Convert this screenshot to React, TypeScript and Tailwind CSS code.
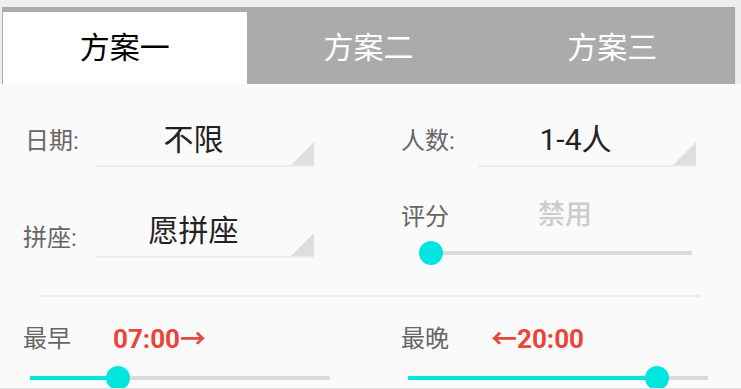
import React from "react";

const FONT = "font-['Roboto','Noto_Sans_CJK_SC',sans-serif]";

const TABS = ["方案一", "方案二", "方案三"];

interface DropdownProps {
  value: string;
}

// spinner: value centred in the space left of the corner triangle
const Dropdown = ({ value }: DropdownProps) => (
  <div className="relative w-[218px] h-[52px] pr-[23px] border-b-2 border-[#ececec] flex items-center justify-center">
    <span className="text-[30px] leading-none text-[#222222]">{value}</span>
    <div className="absolute right-0 bottom-0 w-[23px] h-[23px] bg-[#dedede] [clip-path:polygon(100%_0,100%_100%,0_100%)]" />
  </div>
);

interface SliderProps {
  width: number;
  thumb: number;
  filled?: boolean;
}

const Slider = ({ width, thumb, filled }: SliderProps) => (
  <div className="relative h-[24px]" style={{ width }}>
    <div className="absolute left-0 right-0 top-[10px] h-[4px] bg-[#dadada]" />
    {filled && (
      <div className="absolute left-0 top-[10px] h-[4px] bg-[#00e5e0]" style={{ width: thumb }} />
    )}
    <div
      className="absolute top-0 w-[24px] h-[24px] rounded-full bg-[#00e5e0]"
      style={{ left: thumb - 12 }}
    />
  </div>
);

const Label = ({ children, className = "" }: { children: React.ReactNode; className?: string }) => (
  <span className={`text-[24px] leading-none text-[#666666] ${className}`}>{children}</span>
);

export default function App() {
  return (
    <div className={`w-full h-[389px] overflow-hidden bg-[#fafafa] ${FONT}`}>
      <div className="h-[388px] overflow-hidden">
        {/* Tab bar */}
        <div className="bg-[#eeeeee] pt-[7px] pl-[2px] pr-[6px]">
          <div className="flex bg-[#ababab] pt-[5px] pl-[1px] border-r border-[#a2a2a2]">
            {TABS.map((tab, i) => (
              <div
                key={tab}
                className={`w-[244px] h-[72px] flex items-center justify-center text-[30px] leading-none ${
                  i === 0 ? "bg-white text-black" : "text-white"
                }`}
              >
                {tab}
              </div>
            ))}
          </div>
        </div>

        {/* Filters */}
        <div className="grid grid-cols-[370px_1fr] items-start">
          <div>
            <div className="flex items-center pl-[25px] pt-[31px]">
              <Label className="w-[71px]">日期:</Label>
              <Dropdown value="不限" />
            </div>
            <div className="flex items-center pl-[23px] mt-[39px]">
              <Label className="w-[73px] mt-[12px]">拼座:</Label>
              <Dropdown value="愿拼座" />
            </div>
          </div>
          <div>
            <div className="flex items-center pl-[31px] pt-[31px]">
              <Label className="w-[77px]">人数:</Label>
              <Dropdown value="1-4人" />
            </div>
            <div className="flex items-center h-[30px] mt-[33px] pl-[31px]">
              <Label className="w-[137px] mt-[4px]">评分</Label>
              <span className="text-[27px] leading-none text-[#cccccc] font-medium">禁用</span>
            </div>
            <div className="mt-[11px] pl-[50px]">
              <Slider width={272} thumb={11} />
            </div>
          </div>
        </div>

        <div className="mt-[30px] ml-[38px] mr-[41px] h-[2px] bg-[#ececec]" />

        {/* Time range */}
        <div className="grid grid-cols-[370px_1fr]">
          <div>
            <div className="flex items-center h-[30px] mt-[27px] pl-[23px]">
              <Label className="w-[90px]">最早</Label>
              <span className="text-[26px] leading-none font-bold text-[#e8463a]">07:00→</span>
            </div>
            <div className="mt-[12px] pl-[30px]">
              <Slider width={300} thumb={88} filled />
            </div>
          </div>
          <div>
            <div className="flex items-center h-[30px] mt-[27px] pl-[31px]">
              <Label className="w-[90px]">最晚</Label>
              <span className="text-[26px] leading-none font-bold text-[#e8463a]">←20:00</span>
            </div>
            <div className="mt-[12px] pl-[38px]">
              <Slider width={300} thumb={249} filled />
            </div>
          </div>
        </div>
      </div>
      <div className="h-[1px] bg-[#e0e0e0]" />
    </div>
  );
}
